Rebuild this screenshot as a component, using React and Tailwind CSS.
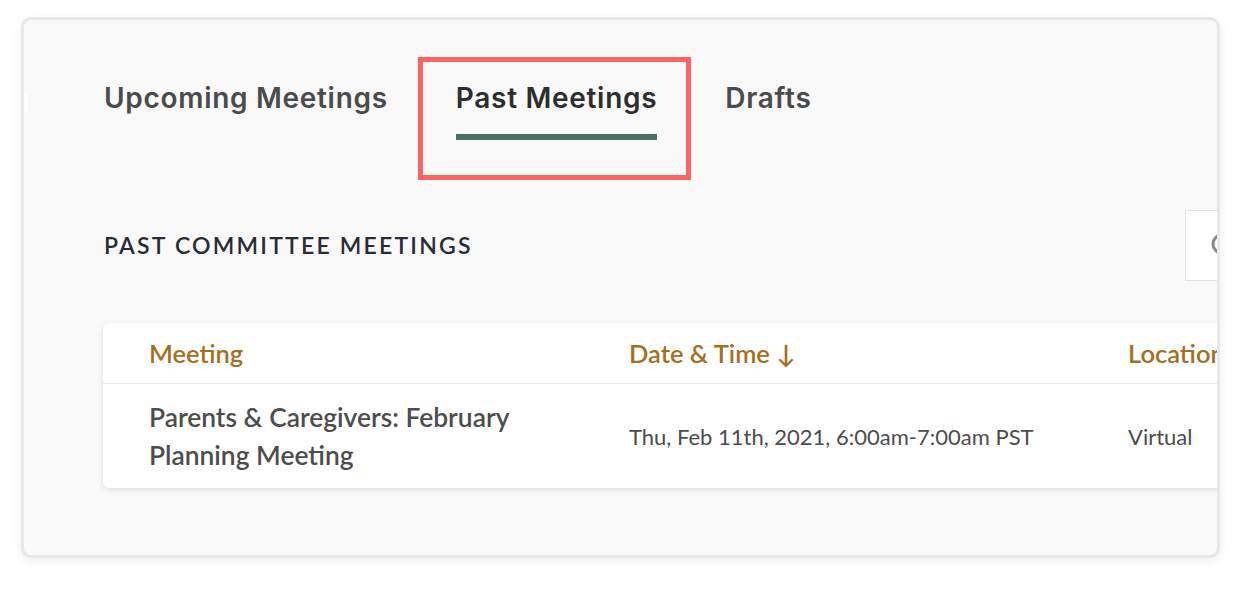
import React, { useState } from "react";

const tabs = ["Upcoming Meetings", "Past Meetings", "Drafts"];

const meetings = [
    {
        title: "Parents & Caregivers: February Planning Meeting",
        date: "Thu, Feb 11th, 2021, 6:00am-7:00am PST",
        location: "Virtual",
    },
];

export default function App() {
    const [activeTab, setActiveTab] = useState("Past Meetings");

    return (
        <div className="min-h-[591px] bg-white pt-[17px] pl-[21px]">
            <div className="relative w-[1199px] h-[541px] overflow-hidden rounded-[10px] border-[3px] border-[#e8e8e8] bg-[#f9f9f9] shadow-[0_3px_10px_rgba(0,0,0,0.07)]">
                {/* scroll nub on the left edge */}
                <span className="absolute left-0 top-[74px] h-[19px] w-[4px] rounded-r-full bg-white" />

                <div className="w-[1400px] pl-[79px] pr-[18px]">
                    <div className="flex gap-[68px] pt-[61px] pl-[1px]">
                        {tabs.map((tab) => {
                            const active = tab === activeTab;
                            return (
                                <button
                                    key={tab}
                                    onClick={() => setActiveTab(tab)}
                                    className={`relative flex flex-col items-stretch text-left font-['Inter',sans-serif] text-[28px] font-semibold leading-[34px] tracking-[0.7px] ${
                                        active ? "text-[#2e2e2e]" : "text-[#4b4b4b]"
                                    }`}
                                >
                                    <span>{tab}</span>
                                    {active && (
                                        <>
                                            <span className="mt-[19px] h-[6px] w-full bg-[#487266]" />
                                            <span className="pointer-events-none absolute -left-[38px] -right-[34px] -top-[24px] -bottom-[40px] border-[5px] border-[#ff6464]" />
                                        </>
                                    )}
                                </button>
                            );
                        })}
                    </div>

                    <div className="mt-[70px] flex items-center justify-between">
                        <h2 className="pl-[1px] font-['Lato',sans-serif] text-[23px] font-semibold uppercase tracking-[2.2px] text-[#2b2b38]">
                            Past Committee Meetings
                        </h2>
                        <div className="flex h-[71px] w-[221px] items-center border border-[#e3e3e3] bg-white pl-[25px]">
                            <svg width="26" height="26" viewBox="0 0 26 26" fill="none" stroke="#8a8a8a" strokeWidth="3">
                                <circle cx="11" cy="11" r="9" />
                                <path d="M18 18l6 6" strokeLinecap="round" />
                            </svg>
                        </div>
                    </div>

                    <div className="mt-[42px] overflow-hidden rounded-[6px] bg-white font-['Lato',sans-serif] shadow-[0_2px_6px_rgba(0,0,0,0.1)]">
                        <div className="grid h-[61px] grid-cols-[480px_499px_1fr] items-center border-b border-[#e6e6e6] pl-[46px] text-[25.5px] font-semibold text-[#a66f1f]">
                            <div>Meeting</div>
                            <div>Date &amp; Time ↓</div>
                            <div>Location</div>
                        </div>
                        {meetings.map((m) => (
                            <div
                                key={m.title}
                                className="grid h-[104px] grid-cols-[480px_499px_1fr] items-center pl-[46px] text-[#4d4d4d]"
                            >
                                <div className="w-[400px] text-[26.4px] font-semibold leading-[38px]">{m.title}</div>
                                <div className="text-[22px]">{m.date}</div>
                                <div className="text-[22px]">{m.location}</div>
                            </div>
                        ))}
                    </div>
                </div>
            </div>
        </div>
    );
}
